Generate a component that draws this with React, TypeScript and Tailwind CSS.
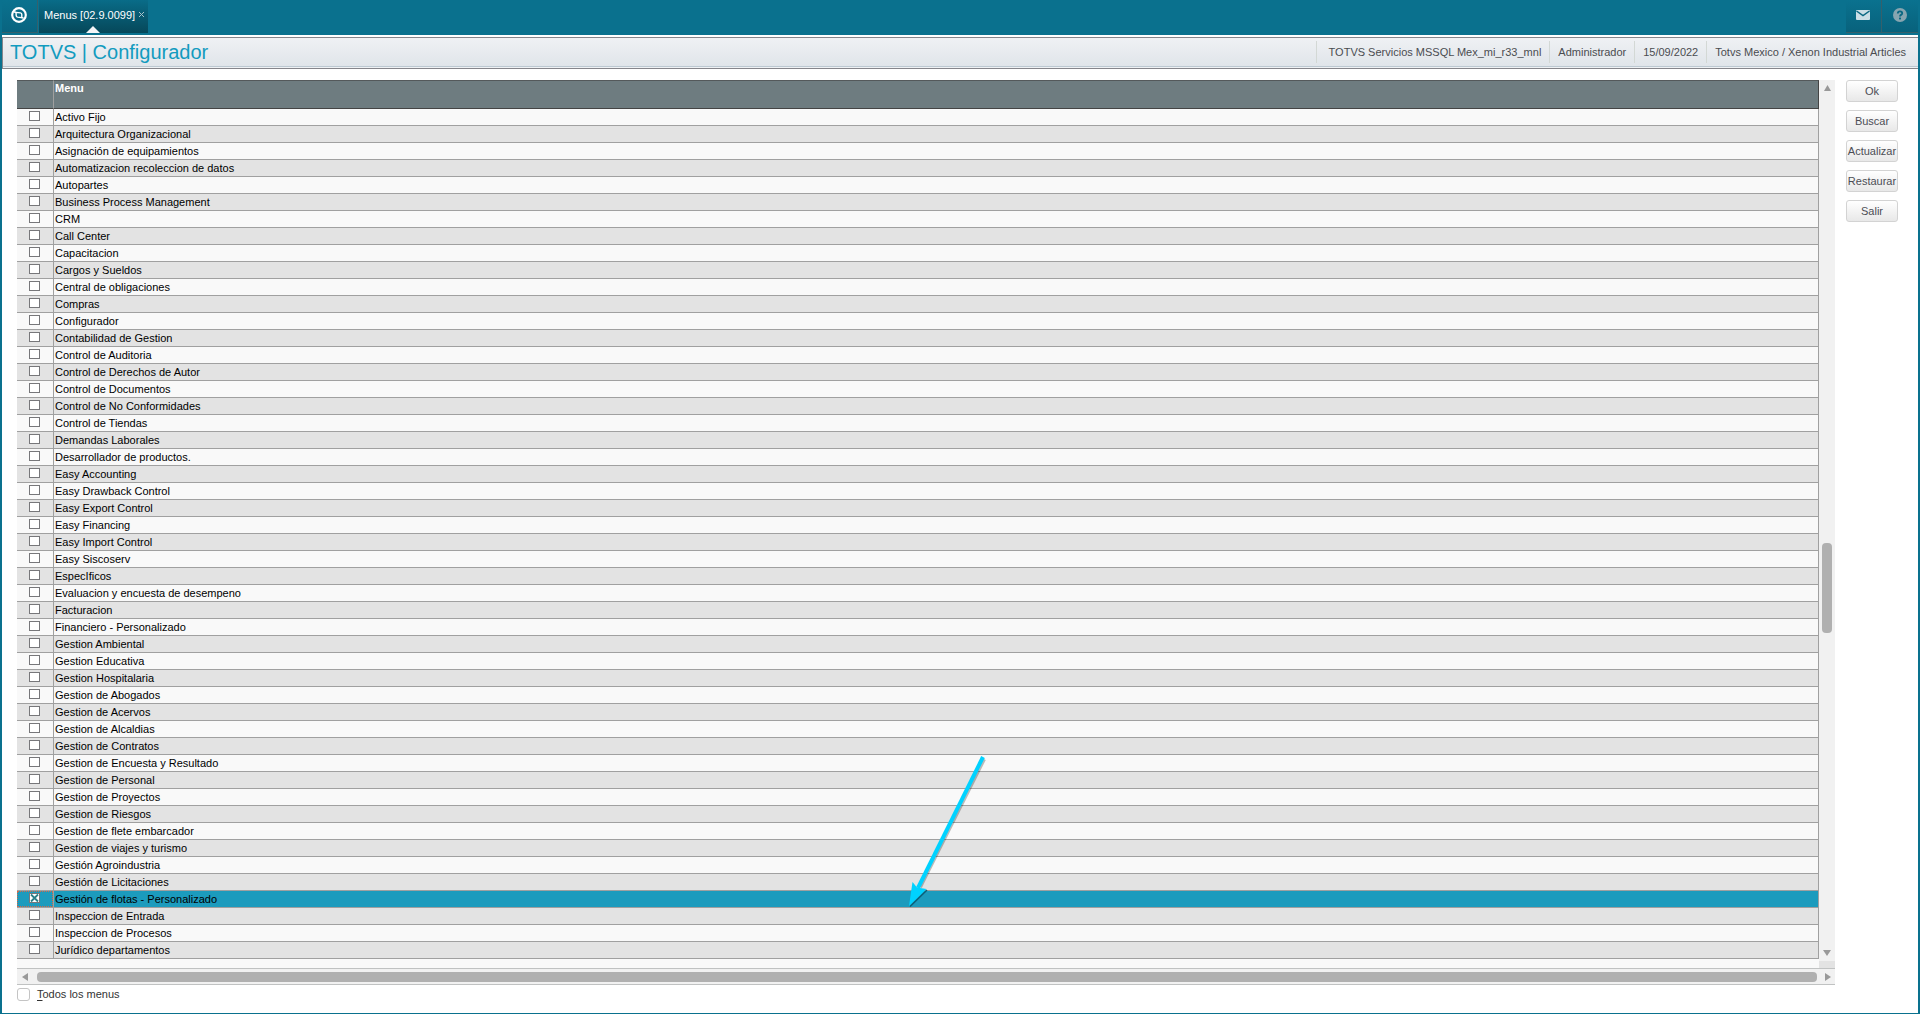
import { useState } from "react";

const menus = [
  "Activo Fijo",
  "Arquitectura Organizacional",
  "Asignación de equipamientos",
  "Automatizacion recoleccion de datos",
  "Autopartes",
  "Business Process Management",
  "CRM",
  "Call Center",
  "Capacitacion",
  "Cargos y Sueldos",
  "Central de obligaciones",
  "Compras",
  "Configurador",
  "Contabilidad de Gestion",
  "Control de Auditoria",
  "Control de Derechos de Autor",
  "Control de Documentos",
  "Control de No Conformidades",
  "Control de Tiendas",
  "Demandas Laborales",
  "Desarrollador de productos.",
  "Easy Accounting",
  "Easy Drawback Control",
  "Easy Export Control",
  "Easy Financing",
  "Easy Import Control",
  "Easy Siscoserv",
  "EspecIficos",
  "Evaluacion y encuesta de desempeno",
  "Facturacion",
  "Financiero - Personalizado",
  "Gestion Ambiental",
  "Gestion Educativa",
  "Gestion Hospitalaria",
  "Gestion de Abogados",
  "Gestion de Acervos",
  "Gestion de Alcaldias",
  "Gestion de Contratos",
  "Gestion de Encuesta y Resultado",
  "Gestion de Personal",
  "Gestion de Proyectos",
  "Gestion de Riesgos",
  "Gestion de flete embarcador",
  "Gestion de viajes y turismo",
  "Gestión Agroindustria",
  "Gestión de Licitaciones",
  "Gestión de flotas - Personalizado",
  "Inspeccion de Entrada",
  "Inspeccion de Procesos",
  "Jurídico departamentos",
];

const actions = ["Ok", "Buscar", "Actualizar", "Restaurar", "Salir"];

const session = [
  "TOTVS Servicios MSSQL Mex_mi_r33_mnl",
  "Administrador",
  "15/09/2022",
  "Totvs Mexico / Xenon Industrial Articles",
];

function TopBar() {
  return (
    <nav className="flex h-[35px] items-start justify-between">
      <div className="flex h-[33px]">
        <button
          aria-label="Inicio"
          className="flex w-9 items-center justify-center border-r border-b border-[#35606c] bg-linear-to-b from-[#0a728f] to-[#096480] pr-px pb-0.5"
        >
          <svg width="16" height="16" viewBox="0 0 16 16" fill="none" stroke="#fff">
            <circle cx="8" cy="8" r="6.8" strokeWidth="2.2" />
            <path d="M5 5.4 9.400 5.900 Q10.800 6.100 10.800 7.400 V10.600 L6.600 10.100 Q5.200 9.900 5.200 8.600 Z" strokeWidth="1.400" />
            <path d="M3 5 5 5.400M10.800 10.600 12.500 11" strokeWidth="1.400" />
          </svg>
        </button>
        <div className="relative ml-px flex w-[109px] justify-between bg-linear-to-b from-[#096c88] to-[#06485a] pr-[3px] pl-[5px]">
          <a href="#menus" className="pt-[7px] text-[11px] leading-4 text-white">
            Menus [02.9.0099]
          </a>
          <button aria-label="Cerrar" className="h-7">
            <svg width="7" height="7" viewBox="0 0 7 7" stroke="#a9c3cb">
              <path d="M1 1 6 6M6 1 1 6" />
            </svg>
          </button>
          <svg className="absolute bottom-0 left-[47px]" width="14" height="7" viewBox="0 0 14 7" fill="#f5f5f7">
            <path d="M7 0 14 7H0Z" />
          </svg>
        </div>
      </div>
      <div className="flex h-[33px]">
        <button
          aria-label="Mensajes"
          className="flex w-9 items-center justify-center border-r border-b border-[#35606c] bg-linear-to-b from-[#0a728f] to-[#08627c] pr-0.5 pb-0.5"
        >
          <svg width="14" height="10" viewBox="0 0 14 10">
            <rect width="14" height="10" rx="1" fill="#cbdde5" />
            <path d="M.5 1 7 5.6 13.500 1" fill="none" stroke="#0a6782" strokeWidth="1.5" />
          </svg>
        </button>
        <button
          aria-label="Ayuda"
          className="flex w-9 items-center justify-center border-b border-[#35606c] bg-linear-to-b from-[#0a728f] to-[#08627c] pb-0.5"
        >
          <svg width="14" height="14" viewBox="0 0 14 14">
            <circle cx="7" cy="7" r="7" fill="#87a5b0" />
            <path d="M4.800 5.500 Q4.800 3.400 7 3.400 Q9.200 3.400 9.200 5.200 Q9.200 6.200 8 6.900 Q7 7.500 7 8.600" fill="none" stroke="#0a6782" strokeWidth="1.800" />
            <rect x="6" y="9.600" width="2" height="1.800" fill="#0a6782" />
          </svg>
        </button>
      </div>
    </nav>
  );
}

function TitleBar() {
  return (
    <header className="mt-0.5 flex h-8 items-center justify-between border border-r-0 border-[#85858b] bg-linear-to-b from-[#eff1f4] to-[#dfe4e9] pr-3 pb-0.5 pl-[7px] shadow-[inset_0_-1px_0_#eef1f4,inset_0_-2px_0_#bcc8d1]">
      <h1 className="text-[20px] leading-7 text-[#129bbf]">TOTVS | Configurador</h1>
      <ul className="flex text-[11px] leading-[22px] text-[#4a4c50]">
        {session.map((item) => (
          <li key={item} className="ml-2 border-l border-[#d3d8d5] pl-2 first:pl-3">
            {item}
          </li>
        ))}
      </ul>
    </header>
  );
}

export default function App() {
  const [checked, setChecked] = useState<string[]>(["Gestión de flotas - Personalizado"]);
  const [selected, setSelected] = useState("Gestión de flotas - Personalizado");
  const [all, setAll] = useState(false);

  const toggle = (menu: string) => {
    setSelected(menu);
    setChecked(
      checked.includes(menu) ? checked.filter((item) => item !== menu) : [...checked, menu]
    );
  };

  return (
    <div className="flex min-h-screen flex-col bg-[#0a718e] px-0.5 pb-px font-['Liberation_Sans',Arial,sans-serif]">
      <TopBar />
      <div className="flex-1 bg-white">
        <TitleBar />
        <main className="flex items-start gap-[11px] pt-[11px] pr-5 pl-[15px]">
          <div className="flex-1">
            <div className="flex bg-[#f9f9f9]">
              <div className="relative mb-[9px] flex-1">
                <table className="w-full table-fixed border-separate border-spacing-0">
                  <thead>
                    <tr className="h-[29px] bg-[#6e7c80] text-left align-top text-[11px] leading-[15px] text-white">
                      <th aria-label="Marca" className="w-[37px] border-t border-r border-b border-t-[#54595b] border-r-[#a0a0a0] border-b-[#444]" />
                      <th className="border-t border-r border-b border-t-[#54595b] border-r-[#444] border-b-[#444] p-0 pl-px align-top font-bold">
                        Menu
                      </th>
                    </tr>
                  </thead>
                  <tbody>
                    {menus.map((menu) => (
                      <tr
                        key={menu}
                        onClick={() => setSelected(menu)}
                        className={
                          selected === menu ? "h-[17px] bg-[#1c9bbd]" : "h-[17px] odd:bg-[#f9f9f9] even:bg-[#e3e3e3]"
                        }
                      >
                        <td className="border-r border-b border-[#a0a0a0] p-0">
                          <div
                            className={
                              selected === menu
                                ? "flex h-4 justify-center border border-dotted border-[#d2694a] pt-px pr-0.5"
                                : "flex h-4 justify-center pt-0.5 pr-0.5"
                            }
                          >
                            <label className="relative block h-[10px] w-[11px]">
                              <input
                                type="checkbox"
                                aria-label={menu}
                                checked={checked.includes(menu)}
                                onChange={() => toggle(menu)}
                                className="block h-[10px] w-[11px] appearance-none border border-[#77777a] bg-white"
                              />
                              {checked.includes(menu) && (
                                <svg className="absolute inset-0" width="11" height="10" viewBox="0 0 11 10" stroke="#2b7f88" strokeWidth="1.800">
                                  <path d="M2 1.500 9 8.500M9 1.500 2 8.500" />
                                </svg>
                              )}
                            </label>
                          </div>
                        </td>
                        <td className="border-r border-b border-[#a0a0a0] p-0 pl-px text-[11px] leading-4 text-black">
                          {menu}
                        </td>
                      </tr>
                    ))}
                  </tbody>
                </table>
                {/* pointer to the selected menu */}
                <svg className="pointer-events-none absolute right-[830px] bottom-[52px]" width="82" height="154" viewBox="0 0 82 154">
                  <path d="M3 153.500 20 137" stroke="#0b5f78" strokeWidth="1.500" />
                  <path d="M77 6 13 134" stroke="#00000040" strokeWidth="4" />
                  <path d="M76 4 11 135" stroke="#00d2ff" strokeWidth="4" />
                  <path d="M2 153 5.500 129 10 134.500 19.500 136Z" fill="#00d2ff" />
                </svg>
              </div>
              <div className="flex w-4 flex-col justify-between border-b-[7px] border-[#e3e3e3] bg-[#f1f1f1]">
                <button aria-label="Subir" className="flex h-4 items-center justify-center">
                  <svg width="7" height="6" viewBox="0 0 7 6" fill="#999">
                    <path d="M3.500 0 7 6H0Z" />
                  </svg>
                </button>
                <div className="flex flex-1 flex-col pl-[3px]">
                  <div className="flex-[447]" />
                  <div className="h-[90px] w-2.5 rounded-[4px] bg-[#b0b0b0]" />
                  <div className="flex-[312]" />
                </div>
                <button aria-label="Bajar" className="flex h-4 items-center justify-center">
                  <svg width="8" height="6" viewBox="0 0 8 6" fill="#999">
                    <path d="M0 0H8L4 6Z" />
                  </svg>
                </button>
              </div>
            </div>
            <div className="flex h-[17px] items-center border-y border-[#c0c2c2] bg-[#f1f1f1]">
              <button aria-label="Izquierda" className="flex w-5 pl-[5px]">
                <svg width="6" height="8" viewBox="0 0 6 8" fill="#999">
                  <path d="M6 0V8L0 4Z" />
                </svg>
              </button>
              <div className="h-2.5 flex-1 rounded-[4px] bg-[#b0b0b0]" />
              <button aria-label="Derecha" className="flex w-[18px] pl-2">
                <svg width="6" height="8" viewBox="0 0 6 8" fill="#999">
                  <path d="M0 0V8L6 4Z" />
                </svg>
              </button>
            </div>
            <label className="mt-[3px] flex w-fit items-center gap-[7px] text-[11px] leading-[13px] text-[#333]">
              <input
                type="checkbox"
                checked={all}
                onChange={() => setAll(!all)}
                className="h-[13px] w-[13px] appearance-none rounded-[3px] border border-[#c4c4c4] bg-white checked:bg-[#1c9bbd]"
              />
              <span>
                <u className="underline-offset-2">T</u>odos los menus
              </span>
            </label>
          </div>
          <div className="flex w-[52px] flex-col gap-2">
            {actions.map((action) => (
              <button
                key={action}
                className="h-[22px] rounded-[3px] border border-[#d3d3d3] bg-linear-to-b from-white to-[#e8e8e8] text-[11px] leading-5 text-[#4c4e55]"
              >
                {action}
              </button>
            ))}
          </div>
        </main>
      </div>
    </div>
  );
}
